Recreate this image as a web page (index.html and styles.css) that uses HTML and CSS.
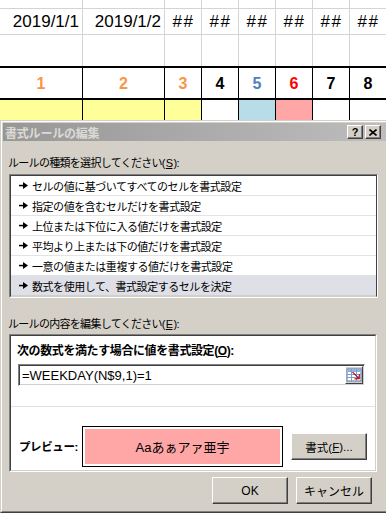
FILE: index.html
```html
<!DOCTYPE html>
<html lang="ja">
<head>
    <meta charset="UTF-8">
    <title>書式ルールの編集</title>
    <link rel="stylesheet" href="styles.css">
</head>
<body>
    <div class="sheet">
        <div class="row r-top">
            <div class="cell"></div><div class="cell"></div><div class="cell"></div><div class="cell"></div>
            <div class="cell"></div><div class="cell"></div><div class="cell"></div><div class="cell"></div>
        </div>
        <div class="row r-date">
            <div class="cell date">2019/1/1</div>
            <div class="cell date">2019/1/2</div>
            <div class="cell hash">##</div><div class="cell hash">##</div><div class="cell hash">##</div>
            <div class="cell hash">##</div><div class="cell hash">##</div><div class="cell hash">##</div>
        </div>
        <div class="row r-blank">
            <div class="cell"></div><div class="cell"></div><div class="cell"></div><div class="cell"></div>
            <div class="cell"></div><div class="cell"></div><div class="cell"></div><div class="cell"></div>
        </div>
        <div class="row r-num">
            <div class="cell num orange">1</div>
            <div class="cell num orange">2</div>
            <div class="cell num orange">3</div>
            <div class="cell num">4</div>
            <div class="cell num blue">5</div>
            <div class="cell num red">6</div>
            <div class="cell num">7</div>
            <div class="cell num">8</div>
        </div>
        <div class="row r-fill">
            <div class="cell fill-yellow"></div>
            <div class="cell fill-yellow"></div>
            <div class="cell fill-yellow"></div>
            <div class="cell"></div>
            <div class="cell fill-blue"></div>
            <div class="cell fill-pink"></div>
            <div class="cell"></div>
            <div class="cell"></div>
        </div>
    </div>

    <div class="dialog">
        <div class="dialog-frame">
            <div class="titlebar">
                <span class="title">書式ルールの編集</span>
                <div class="tb-buttons">
                    <span class="tb-btn">?</span>
                    <span class="tb-btn">
                        <svg width="8" height="7" viewBox="0 0 8 7"><path d="M0.5 0.5 L7.5 6.5 M7.5 0.5 L0.5 6.5" stroke="#000" stroke-width="1.6"/></svg>
                    </span>
                </div>
            </div>
            <div class="dialog-body">
                <div class="label">ルールの種類を選択してください(<u>S</u>):</div>
                <div class="list">
                    <div class="list-inner">
                        <div class="item"><svg class="arrow" width="9" height="7" viewBox="0 0 9 7"><rect x="0" y="2.8" width="5" height="1.5" fill="#000"/><path d="M4 0 L9 3.5 L4 7 Z" fill="#000"/></svg>セルの値に基づいてすべてのセルを書式設定</div>
                        <div class="item"><svg class="arrow" width="9" height="7" viewBox="0 0 9 7"><rect x="0" y="2.8" width="5" height="1.5" fill="#000"/><path d="M4 0 L9 3.5 L4 7 Z" fill="#000"/></svg>指定の値を含むセルだけを書式設定</div>
                        <div class="item"><svg class="arrow" width="9" height="7" viewBox="0 0 9 7"><rect x="0" y="2.8" width="5" height="1.5" fill="#000"/><path d="M4 0 L9 3.5 L4 7 Z" fill="#000"/></svg>上位または下位に入る値だけを書式設定</div>
                        <div class="item"><svg class="arrow" width="9" height="7" viewBox="0 0 9 7"><rect x="0" y="2.8" width="5" height="1.5" fill="#000"/><path d="M4 0 L9 3.5 L4 7 Z" fill="#000"/></svg>平均より上または下の値だけを書式設定</div>
                        <div class="item"><svg class="arrow" width="9" height="7" viewBox="0 0 9 7"><rect x="0" y="2.8" width="5" height="1.5" fill="#000"/><path d="M4 0 L9 3.5 L4 7 Z" fill="#000"/></svg>一意の値または重複する値だけを書式設定</div>
                        <div class="item selected"><svg class="arrow" width="9" height="7" viewBox="0 0 9 7"><rect x="0" y="2.8" width="5" height="1.5" fill="#000"/><path d="M4 0 L9 3.5 L4 7 Z" fill="#000"/></svg>数式を使用して、書式設定するセルを決定</div>
                    </div>
                </div>

                <div class="label label-edit">ルールの内容を編集してください(<u>E</u>):</div>
                <div class="panel">
                    <div class="panel-inner">
                        <div class="panel-top">
                            <div class="plabel">次の数式を満たす場合に値を書式設定(<u>O</u>):</div>
                            <div class="input">
                                <span class="formula">=WEEKDAY(N$9,1)=1</span>
                                <span class="refbtn">
                                    <svg width="16" height="16" viewBox="0 0 16 16">
                                        <rect x="1" y="2" width="14" height="12" fill="#fff" stroke="#5a7bb5"/>
                                        <rect x="1.5" y="2.5" width="13" height="2.5" fill="#8fb0e0"/>
                                        <path d="M1 7.5 H15 M1 10.5 H15 M5.5 2 V14 M10.5 2 V14" stroke="#7d9dd0" stroke-width="1"/>
                                        <path d="M7 5 L12.5 10.5 L13.5 7 L13.5 12 L8.5 12 L12 11 L6.5 5.5 Z" fill="#e02020" stroke="#b00000" stroke-width="0.6"/>
                                    </svg>
                                </span>
                            </div>
                        </div>
                        <div class="panel-bottom">
                            <span class="plabel preview-label">プレビュー:</span>
                            <div class="preview"><div class="preview-inner">Aaあぁアァ亜宇</div></div>
                            <div class="btn btn-format">書式(<u>F</u>)...</div>
                        </div>
                    </div>
                </div>

                <div class="actions">
                    <div class="btn">OK</div>
                    <div class="btn">キャンセル</div>
                </div>
            </div>
        </div>
    </div>
</body>
</html>
```

FILE: styles.css
```css
* {
    box-sizing: border-box;
}

body,
html {
    margin: 0;
    padding: 0;
    width: 386px;
    height: 513px;
    overflow: hidden;
    background-color: white;
    font-family: "Liberation Sans", "Noto Sans CJK JP", sans-serif;
}

/* spreadsheet */

.row {
    display: grid;
    grid-template-columns: 83px 82px repeat(6, 37px);
    border-bottom: 1px solid #d4d4d4;
}

.cell {
    border-right: 1px solid #d4d4d4;
}

.r-top {
    height: 9px;
}

.r-date {
    height: 26px;
}

.r-blank {
    height: 33px;
    border-bottom: 2px solid #000;
}

.r-num {
    height: 32px;
    border-bottom: 2px solid #000;
}

.r-fill {
    height: 20px;
    border-bottom: none;
}

.r-num .cell,
.r-fill .cell {
    border-right-color: #000;
}

.date,
.hash {
    font-size: 17px;
    line-height: 25px;
    color: #000;
}

.date {
    text-align: right;
    padding-right: 3px;
}

.hash {
    text-align: center;
    letter-spacing: 1.5px;
    padding-left: 1px;
}

.num {
    font-size: 16px;
    font-weight: bold;
    text-align: center;
    line-height: 30px;
    padding-top: 1px;
}

.orange { color: #f79646; }
.blue { color: #4f81bd; }
.red { color: #ff0000; }

.fill-yellow { background-color: #ffff99; }
.fill-blue { background-color: #b7dde8; }
.fill-pink { background-color: #ffa6a6; }

/* dialog */

.dialog {
    width: 390px;
    height: 393px;
    border: 1px solid;
    border-color: #d4d0c8 #404040 #404040 #d4d0c8;
    background-color: #d4d0c8;
    font-family: "Liberation Sans", "Noto Sans CJK JP", sans-serif;
    font-size: 11px;
    color: #000;
}

.dialog-frame {
    height: 100%;
    border: 1px solid;
    border-color: #fff #808080 #808080 #fff;
    padding: 1px;
    display: flex;
    flex-direction: column;
}

.titlebar {
    height: 18px;
    display: flex;
    align-items: center;
    justify-content: space-between;
    padding: 0 6px 0 2px;
    background: linear-gradient(to right, #979797, #bdbdbd);
}

.title {
    font-weight: bold;
    font-size: 12px;
    color: #dcdad4;
    letter-spacing: -0.2px;
}

.tb-buttons {
    display: flex;
    gap: 2px;
}

.tb-btn {
    width: 16px;
    height: 14px;
    display: flex;
    align-items: center;
    justify-content: center;
    background-color: #d4d0c8;
    border: 1px solid;
    border-color: #fff #404040 #404040 #fff;
    box-shadow: inset -1px -1px #808080;
    font-size: 11px;
    font-weight: bold;
    line-height: 1;
}

.dialog-body {
    flex: 1;
    padding: 15px 0 0 6px;
    display: flex;
    flex-direction: column;
}

.label {
    line-height: 14px;
    margin-left: -1px;
    letter-spacing: -0.7px;
}

.label u {
    margin: 0 1px;
}

.label-edit {
    margin-top: 19px;
}

.list {
    margin-top: 4px;
    width: 369px;
    border: 1px solid;
    border-color: #808080 #fff #fff #808080;
}

.list-inner {
    border: 1px solid;
    border-color: #404040 #404040 #d4d0c8 #404040;
    background-color: #fff;
}

.item {
    height: 20px;
    display: flex;
    align-items: center;
    padding-left: 8px;
    border-bottom: 1px solid #e3e3e3;
    letter-spacing: -0.45px;
    white-space: nowrap;
}

.item.selected {
    background-color: #dfdfe7;
    border-bottom-color: #cfcfcf;
}

.arrow {
    margin-right: 4px;
    flex: none;
}

.panel {
    margin-top: 3px;
    width: 368px;
    height: 138px;
    border: 1px solid;
    border-color: #808080 #fff #fff #808080;
}

.panel-inner {
    height: 100%;
    border: 1px solid;
    border-color: #404040 #d4d0c8 #d4d0c8 #404040;
    background-color: #fff;
}

.panel-top {
    height: 71px;
    padding: 8px 0 0 7px;
    border-bottom: 1px solid #e0e0e0;
}

.plabel {
    font-weight: bold;
    line-height: 14px;
    letter-spacing: -0.4px;
    font-size: 12px;
    margin-left: -1px;
}

.input {
    margin-top: 6px;
    width: 347px;
    height: 22px;
    display: flex;
    align-items: center;
    justify-content: space-between;
    border: 1px solid;
    border-color: #808080 #fff #fff #808080;
    box-shadow: inset 1px 1px #404040, inset -1px -1px #d4d0c8;
    padding: 0 1px 0 3px;
}

.formula {
    font-size: 13px;
}

.refbtn {
    width: 18px;
    height: 18px;
    display: flex;
    align-items: center;
    justify-content: center;
    background-color: #d4d0c8;
    border: 1px solid;
    border-color: #fff #404040 #404040 #fff;
}

.panel-bottom {
    display: flex;
    align-items: center;
    padding: 19px 0 0 8px;
}

.preview-label {
    width: 63px;
    margin-left: 0;
    font-size: 11.5px;
    letter-spacing: -0.4px;
}

.preview {
    width: 201px;
    height: 41px;
    border: 1px solid #000;
    padding: 2px;
    background-color: #fff;
}

.preview-inner {
    height: 100%;
    background-color: #ffa6a6;
    display: flex;
    align-items: center;
    justify-content: center;
    font-size: 13px;
}

.btn {
    width: 76px;
    height: 27px;
    display: flex;
    align-items: center;
    justify-content: center;
    background-color: #d4d0c8;
    border: 1px solid;
    border-color: #fff #404040 #404040 #fff;
    box-shadow: inset -1px -1px #808080;
    font-size: 12px;
    white-space: nowrap;
}

.btn-format {
    margin-left: 8px;
    font-size: 11.5px;
}

.actions {
    width: 368px;
    margin-top: 5px;
    padding-right: 5px;
    display: flex;
    justify-content: flex-end;
    gap: 8px;
}
```
